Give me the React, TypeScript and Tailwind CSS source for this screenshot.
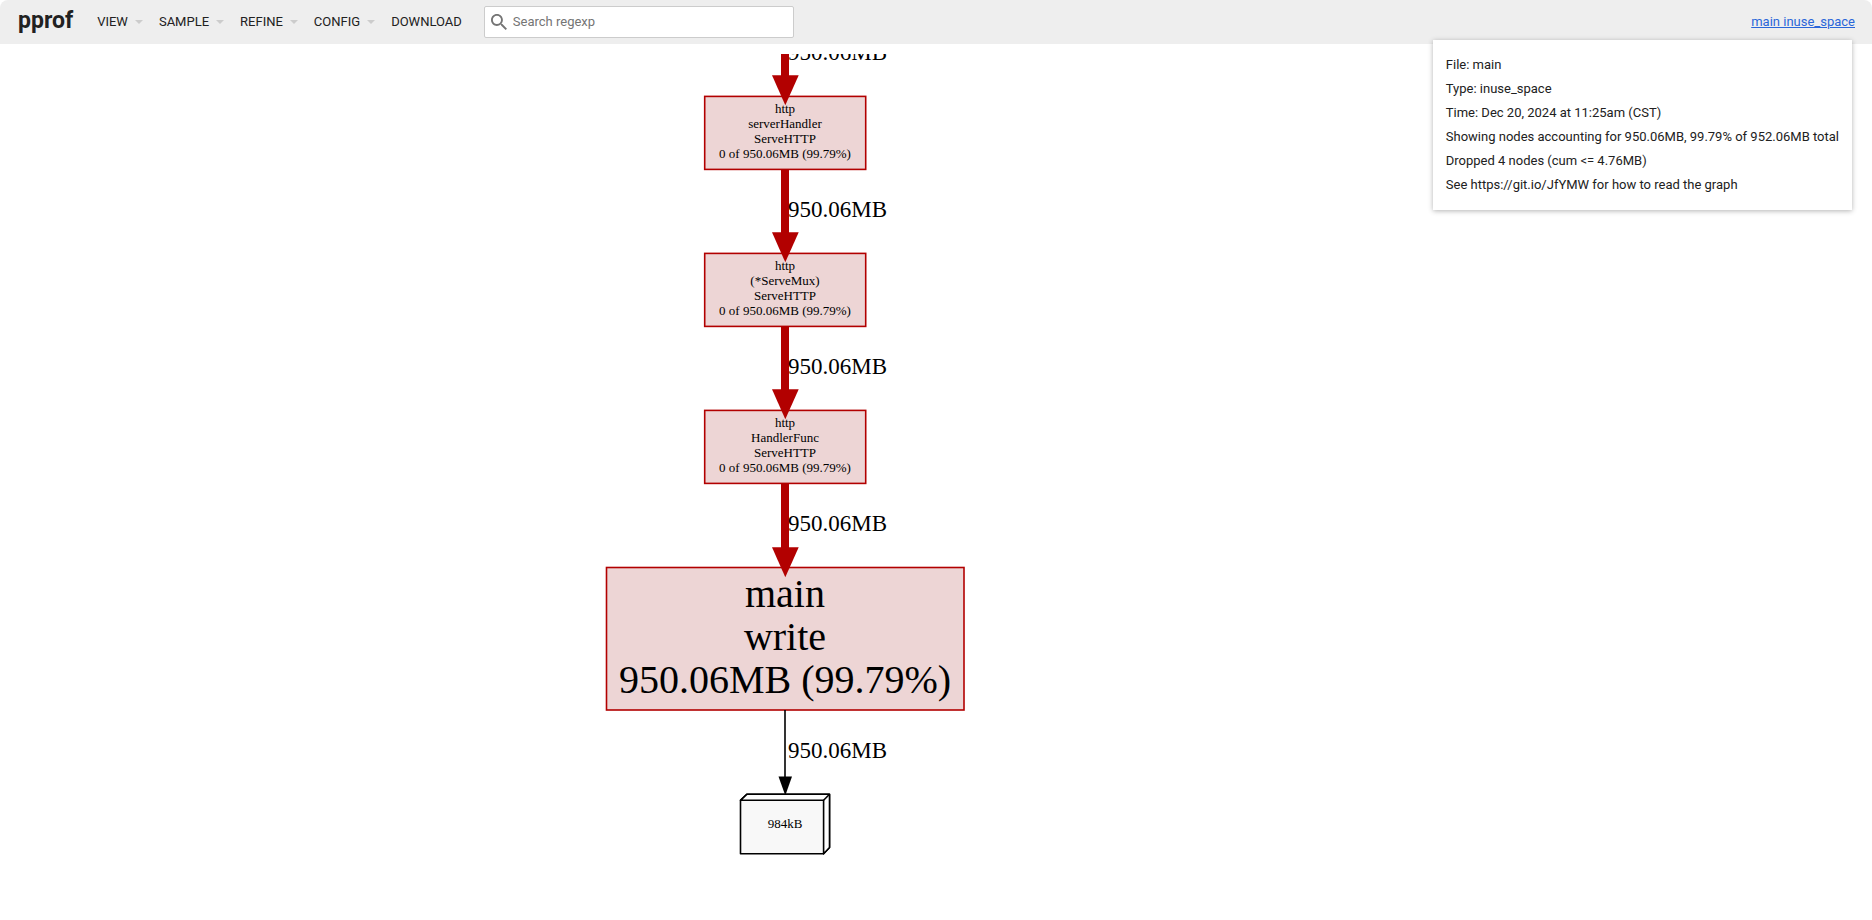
import React from 'react';

const menus = ['VIEW', 'SAMPLE', 'REFINE', 'CONFIG'];

const details = [
  'File: main',
  'Type: inuse_space',
  'Time: Dec 20, 2024 at 11:25am (CST)',
  'Showing nodes accounting for 950.06MB, 99.79% of 952.06MB total',
  'Dropped 4 nodes (cum <= 4.76MB)',
  'See https://git.io/JfYMW for how to read the graph',
];

const httpNodes = [
  { y: 42, lines: ['http', 'serverHandler', 'ServeHTTP', '0 of 950.06MB (99.79%)'] },
  { y: 199, lines: ['http', '(*ServeMux)', 'ServeHTTP', '0 of 950.06MB (99.79%)'] },
  { y: 356, lines: ['http', 'HandlerFunc', 'ServeHTTP', '0 of 950.06MB (99.79%)'] },
];

const edges = [-42, 115, 272, 430];
const edgeLabels = [6, 163, 320, 477, 704];

function Graph() {
  return (
    <svg
      className="block h-full w-full font-['Liberation_Serif',serif]"
      role="img"
      aria-label="Call graph"
    >
      {httpNodes.map((node) => (
        <rect
          key={node.y}
          x="704.7"
          y={node.y + 0.4}
          width="161"
          height="73"
          fill="#edd5d5"
          stroke="#b20000"
          strokeWidth="1.6"
        />
      ))}
      <rect x="606.5" y="513.5" width="357.5" height="142.5" fill="#edd5d5" stroke="#b20000" strokeWidth="1.6" />
      {edges.map((y) => (
        <g key={y} fill="#b20000">
          <rect x="781" y={y} width="8" height="66" />
          <path d={`M772 ${y + 63.3}H798.7L785.3 ${y + 93.3}Z`} />
        </g>
      ))}
      {httpNodes.map((node) => (
        <g key={node.y} className="text-[13px]" textAnchor="middle">
          {node.lines.map((line, i) => (
            <text key={i} x="785" y={node.y + 17 + i * 15}>
              {line}
            </text>
          ))}
        </g>
      ))}
      <g className="text-[40px]" textAnchor="middle">
        <text x="785" y="553">main</text>
        <text x="785" y="596">write</text>
        <text x="785" y="639">950.06MB (99.79%)</text>
      </g>
      <path d="M785 656V724" stroke="#000" strokeWidth="1.6" />
      <path d="M778.5 722.5H792L785.3 741.5Z" />
      <g stroke="#000" strokeWidth="1.6" strokeLinejoin="round">
        <path d="M746.8 740.3H829.5V793.5L823.6 799.8H740.5V746.3Z" fill="#f8f8f8" />
        <path d="M746.8 740.3H829.5V793.5L823.6 799.8V746.3H740.5Z" fill="#fdfdfd" />
        <path d="M823.6 746.3L829.5 740.3" fill="none" />
      </g>
      <text className="text-[13px]" textAnchor="middle" x="785" y="774">984kB</text>
      <g className="text-[23px]">
        {edgeLabels.map((y) => (
          <text key={y} x="788" y={y}>950.06MB</text>
        ))}
      </g>
    </svg>
  );
}

export default function App() {
  return (
    <div className="flex h-screen flex-col overflow-hidden rounded-lg bg-white font-[Roboto,sans-serif] text-[13px] text-[#212121]">
      <header className="flex h-11 shrink-0 items-center bg-[#eeeeee] pr-[17px] pl-[18px]">
        <h1 className="mr-4 pb-0.5 text-[23px] leading-8 font-bold">pprof</h1>
        <nav className="flex items-center">
          {menus.map((name) => (
            <button key={name} type="button" className="flex items-center gap-[7px] px-2">
              {name}
              <span className="border-x-4 border-t-4 border-x-transparent border-t-[#cccccc]" />
            </button>
          ))}
          <a href="#download" className="px-2">DOWNLOAD</a>
        </nav>
        <label className="ml-[14px] flex h-8 w-[310px] items-center gap-[6px] rounded-xs border border-[#cccccc] bg-white pl-[6px]">
          <svg className="size-[16px] shrink-0" viewBox="3 3 17.5 17.5" fill="#757575" aria-hidden="true">
            <path d="M15.5 14h-.79l-.28-.27C15.41 12.59 16 11.11 16 9.5 16 5.91 13.09 3 9.5 3S3 5.91 3 9.5 5.91 16 9.5 16c1.61 0 3.09-.59 4.23-1.57l.27.28v.79l5 4.99L20.49 19l-4.99-5zm-6 0C7.01 14 5 11.99 5 9.5S7.01 5 9.5 5 14 7.01 14 9.5 11.99 14 9.5 14z" />
          </svg>
          <input
            type="text"
            aria-label="Search regexp"
            placeholder="Search regexp"
            className="min-w-0 flex-1 bg-transparent outline-none placeholder:text-[#757575]"
          />
        </label>
        <div className="relative ml-auto">
          <a href="#details" className="text-[#2a66d9] underline">main inuse_space</a>
          <div className="absolute top-7 right-[3px] bg-white p-[13px] leading-6 whitespace-nowrap shadow-[0_1px_5px_rgba(0,0,0,0.3)]">
            {details.map((line) => (
              <p key={line}>{line}</p>
            ))}
          </div>
        </div>
      </header>
      <main className="min-h-0 flex-1 pt-[10px]">
        <Graph />
      </main>
    </div>
  );
}
